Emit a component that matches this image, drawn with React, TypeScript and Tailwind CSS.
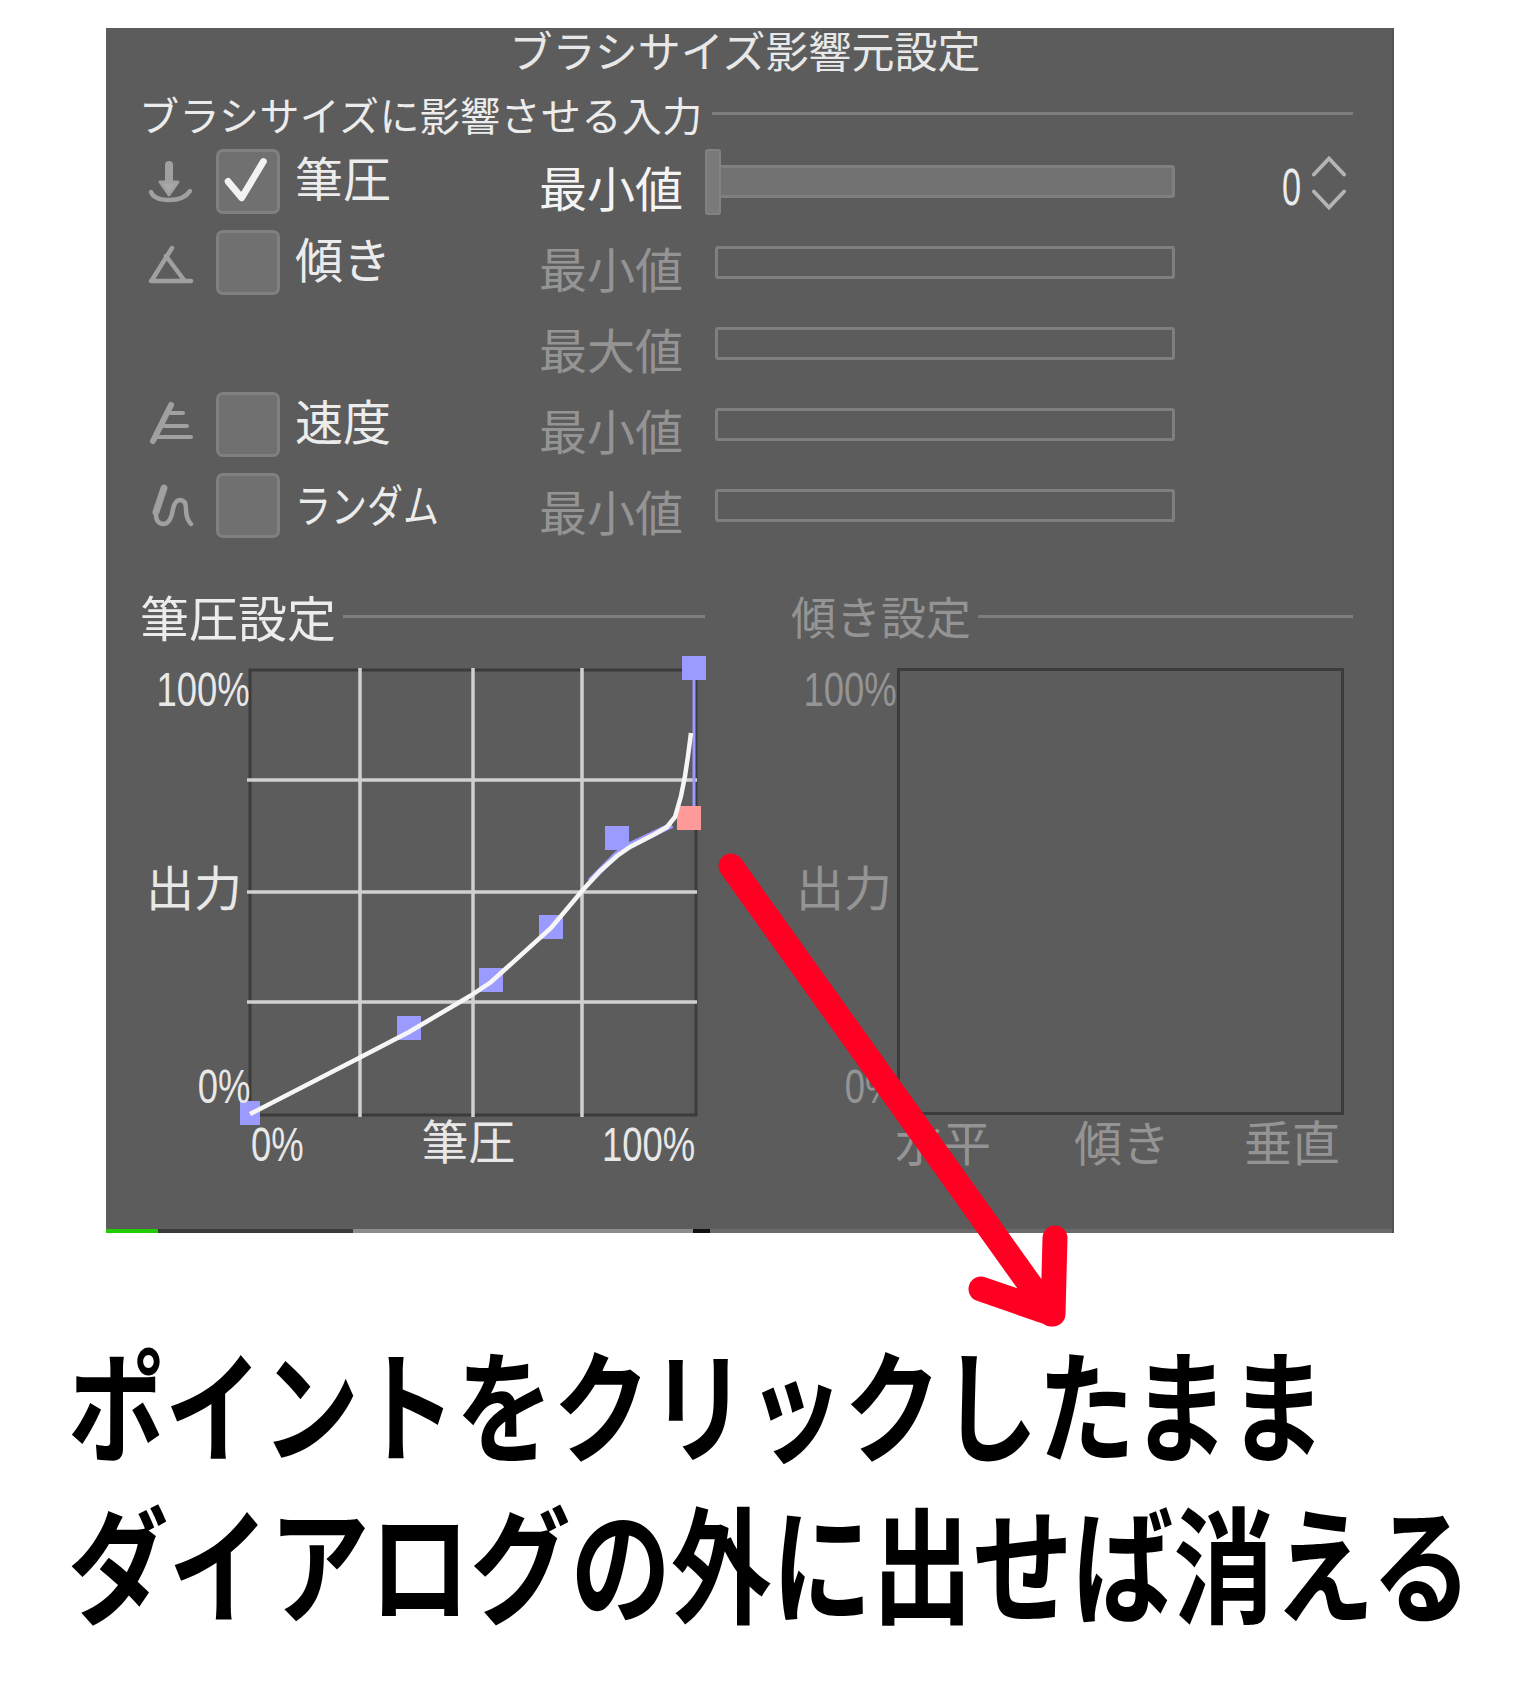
const muted = "text-[#949494]";
const line = "mt-[3px] h-[3px] flex-1 bg-[#7e7e7e]";
const digits = "shrink-0 whitespace-nowrap font-['Liberation_Sans',sans-serif] text-[48px] leading-[36px] scale-x-[0.76]";

function PressureIcon() {
  return (
    <svg viewBox="0 0 70 70" className="h-[70px] w-[70px]" fill="none" stroke="#a0a0a0" strokeLinecap="round" strokeLinejoin="round">
      <path d="M29 14v18" strokeWidth="8" />
      <path d="M20 31h18l-9 13z" fill="#a8a8a8" strokeWidth="3" />
      <path d="M11 41q3 8 18 8t21-9" strokeWidth="4.5" />
    </svg>
  );
}

function TiltIcon() {
  return (
    <svg viewBox="0 0 70 70" className="h-[70px] w-[70px]" fill="none" stroke="#a0a0a0" strokeWidth="4.5" strokeLinecap="round">
      <path d="M32 16L12 48M26 24l18 24M11 49h40" />
    </svg>
  );
}

function SpeedIcon() {
  return (
    <svg viewBox="0 0 70 70" className="h-[70px] w-[70px]" fill="none" stroke="#a0a0a0" strokeLinecap="round">
      <path d="M31 11L13 47" strokeWidth="6" />
      <path d="M30 19h13M24 32h23M17 43h34" strokeWidth="4" />
    </svg>
  );
}

function RandomIcon() {
  return (
    <svg viewBox="0 0 70 70" className="h-[70px] w-[70px]" fill="none" stroke="#a0a0a0" strokeLinecap="round">
      <path d="M24 13L16 37" strokeWidth="7" />
      <path d="M16 37q-1 12 8 12q7-1 9-15q2-9 7-9q6 0 6 9q0 10 5 15" strokeWidth="4.5" />
    </svg>
  );
}

function Slider({ active }: { active?: boolean }) {
  return (
    <div className={`relative h-[33px] w-[460px] rounded-[3px] border-[3px] border-[#7f7f7f] ${active ? "bg-[#727272]" : ""}`}>
      {active && (
        <div className="absolute left-[-13px] top-[-19px] h-[66px] w-[16px] rounded-[3px] border-2 border-[#828282] bg-[#7a7a7a]" />
      )}
    </div>
  );
}

const rows = [
  { icon: <PressureIcon />, name: "筆圧", value: "最小値", checked: true },
  { icon: <TiltIcon />, name: "傾き", value: "最小値" },
  { value: "最大値" },
  { icon: <SpeedIcon />, name: "速度", value: "最小値" },
  { icon: <RandomIcon />, name: "ランダム", value: "最小値" },
];

function InputRow({ icon, name, value, checked }: { icon?: React.ReactNode; name?: string; value: string; checked?: boolean }) {
  return (
    <div className="flex h-[66px] items-center">
      <div className="-ml-px mt-[10px] w-[76px]">{icon}</div>
      <div className="w-[64px]">
        {name && (
          <div className="flex h-[65px] w-[64px] items-center justify-center rounded-[7px] border-[3px] border-[#808080] bg-[#707070]">
            {checked && (
              <svg viewBox="0 0 64 65" className="h-[64px] w-[64px]" fill="none" stroke="#f2f2f2" strokeWidth="7.5" strokeLinecap="round" strokeLinejoin="round">
                <path d="M10 33l15 18L49 11" />
              </svg>
            )}
          </div>
        )}
      </div>
      {name === "ランダム" ? (
        <div className="ml-[15px] w-[244px] pb-[4px]">
          <div className="origin-left scale-x-[0.8] whitespace-nowrap text-[45px] leading-none text-[#ececec]">{name}</div>
        </div>
      ) : (
        <div className="ml-[15px] w-[244px] pb-[10px] text-[48px] leading-none text-[#ececec]">{name}</div>
      )}
      <div className={`w-[176px] pt-[9px] text-[48px] leading-none ${checked ? "text-[#f4f4f4]" : muted}`}>{value}</div>
      <Slider active={checked} />
      {checked && (
        <div className="ml-[102px] flex items-center gap-[6px]">
          <span className="scale-x-[0.66] pt-[12px] font-['Liberation_Sans',sans-serif] text-[52px] leading-none text-[#ececec]">0</span>
          <svg viewBox="0 0 36 56" className="mt-[4px] h-[56px] w-[34px]" fill="none" stroke="#b4b4b4" strokeWidth="4" strokeLinecap="round">
            <path d="M2 19L18 2l16 17M2 37l16 17 16-17" />
          </svg>
        </div>
      )}
    </div>
  );
}

const curve =
  "M250 1113L359 1057L409 1031L470 995L491 981L551 927L582 890L600 870L617 855L630 846L655 833L667 826L675 816L681 795L685 775L688 755L691 732";

function PressureChart() {
  return (
    <svg viewBox="240 655 470 475" className="-m-[10px] block h-[475px] w-[470px] shrink-0" fill="none">
      <rect x="250" y="669" width="446" height="445" stroke="#3b3b3b" strokeWidth="3" />
      <path d="M360 667v449M473 667v449M582 667v449M247 779h450M247 891h450M247 1001h450" stroke="#d0d0d0" strokeWidth="3.5" />
      <path d="M694 667V812" stroke="#9a9aff" strokeWidth="3" />
      <path d="M672 824L630 844L617 853L590 880" stroke="#9a9aff" strokeWidth="6" />
      {[
        [694, 667],
        [617, 837],
        [551, 926],
        [491, 979],
        [409, 1027],
        [248, 1112],
      ].map(([x, y]) => (
        <rect key={x} x={x - 12} y={y - 12} width="24" height="24" fill="#9a9aff" />
      ))}
      <rect x="677" y="805" width="24" height="24" fill="#ff9a9a" />
      <path d={curve} stroke="#f6f6f6" strokeWidth="4.5" />
    </svg>
  );
}

function AxisLabels({ dim }: { dim?: boolean }) {
  return (
    <div className={`flex shrink-0 flex-col items-end ${dim ? `w-[106px] ${muted}` : "w-[109px] text-[#e8e8e8]"}`}>
      <div className={`mt-[6px] origin-right ${digits}`}>100%</div>
      <div className={`mt-[153px] text-[48px] leading-none ${dim ? "mr-[5px]" : "mr-[8px]"}`}>出力</div>
      <div className={`mt-[160px] origin-right ${digits}`}>0%</div>
    </div>
  );
}

export default function App() {
  return (
    <div className="relative h-[1684px] w-[1519px] overflow-hidden bg-white pl-[106px] pt-[28px] font-['Noto_Sans_CJK_JP',sans-serif]">
      <div className="flex h-[1205px] w-[1288px] flex-col overflow-hidden border-r-2 border-[#545454] bg-[#5c5c5c]">
        <div className="flex-1 pl-[35px] pr-[39px]">
          <div className="-mb-px h-[46px] pr-[4px] text-center text-[43px] leading-[42px] text-[#e8e8e8]">
            ブラシサイズ影響元設定
          </div>
          <div className="mt-[17px] flex h-[47px] items-center gap-[9px]">
            <div className="-ml-[2px] whitespace-nowrap text-[40px] leading-none tracking-[0.4px] text-[#ececec]">ブラシサイズに影響させる入力</div>
            <div className="-mt-[1px] h-[3px] flex-1 bg-[#7e7e7e]" />
          </div>

          <div className="mt-[11px] flex flex-col gap-[15px]">
            {rows.map((row, i) => (
              <InputRow key={i} {...row} />
            ))}
          </div>

          <div className="mt-[55px] flex gap-[86px]">
            <section className="w-[564px]">
              <div className="flex h-[44px] items-center gap-[7px]">
                <div className="-ml-px whitespace-nowrap text-[49px] leading-none text-[#ececec]">筆圧設定</div>
                <div className={line} />
              </div>
              <div className="mt-[29px] flex items-start">
                <AxisLabels />
                <PressureChart />
              </div>
              <div className="ml-[110px] mt-[-7px] flex items-center text-[#e8e8e8]">
                <span className={`origin-left pt-[13px] ${digits}`}>0%</span>
                <span className="ml-[101px] shrink-0 whitespace-nowrap text-[47px] leading-none">筆圧</span>
                <span className={`ml-[87px] origin-left pt-[13px] ${digits}`}>100%</span>
              </div>
            </section>

            <section className="flex-1">
              <div className="flex h-[44px] items-center gap-[7px]">
                <div className={`whitespace-nowrap text-[45px] leading-none ${muted}`}>傾き設定</div>
                <div className={line} />
              </div>
              <div className="mt-[29px] flex items-start">
                <AxisLabels dim />
                <div className="mt-[2px] h-[447px] w-[447px] shrink-0 border-[3px] border-[#3b3b3b]" />
              </div>
              <div className={`ml-[104px] mt-[1px] flex text-[48px] leading-none ${muted}`}>
                <span>水平</span>
                <span className="ml-[83px]">傾き</span>
                <span className="ml-[74px]">垂直</span>
              </div>
            </section>
          </div>
        </div>

        {/* strip of the window behind, cut off at the bottom edge */}
        <div className="flex h-[4px] bg-[#6a6a6a]">
          <div className="w-[52px] bg-[#22cc00]" />
          <div className="w-[195px] bg-[#3a3a3a]" />
          <div className="w-[340px] bg-[#8c8c8c]" />
          <div className="w-[17px] bg-[#111111]" />
        </div>
      </div>

      <div className="ml-[-38px] mt-[102px] flex flex-col gap-[55px] whitespace-nowrap font-bold text-black">
        <div className="origin-top-left scale-y-[1.25] text-[97px] leading-[104px]">ポイントをクリックしたまま</div>
        <div className="origin-top-left scale-y-[1.25] text-[100.5px] leading-[104px]">ダイアログの外に出せば消える</div>
      </div>

      <svg viewBox="0 0 1519 1684" className="pointer-events-none absolute inset-0 h-[1684px] w-[1519px]" fill="none" stroke="#ff0022" strokeWidth="25" strokeLinecap="round" strokeLinejoin="round">
        <path d="M731 866L1051 1314M1055 1238L1053 1314L981 1289" />
      </svg>
    </div>
  );
}
